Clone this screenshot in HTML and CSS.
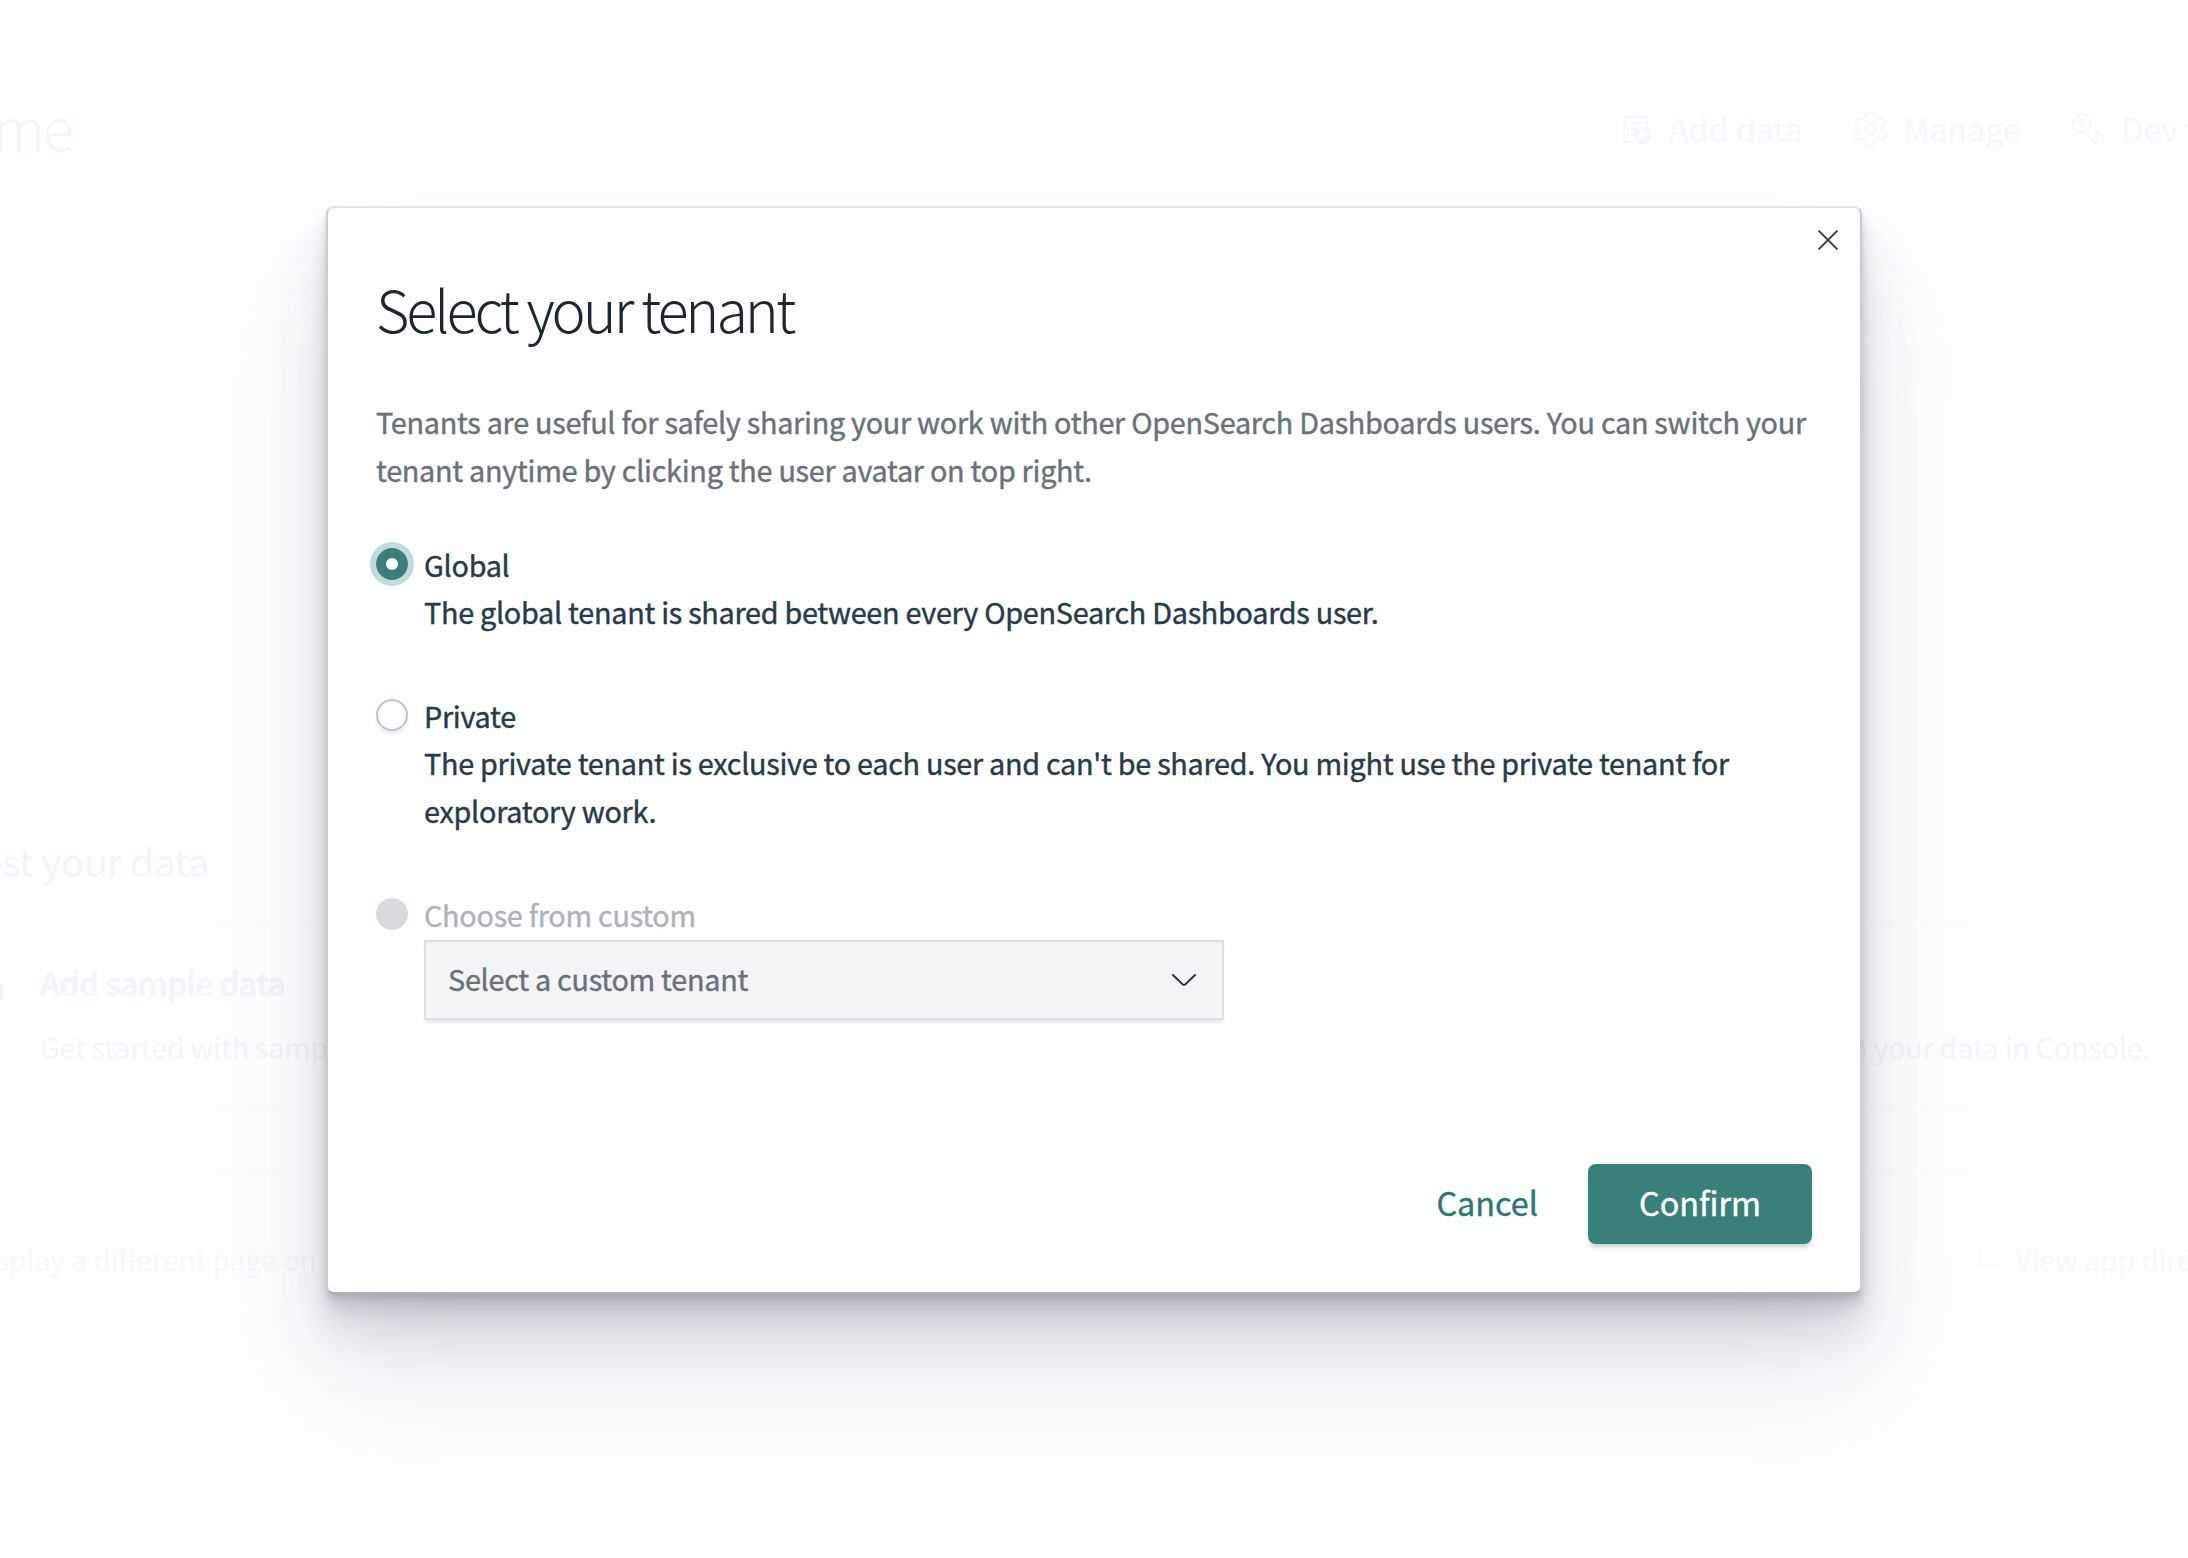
FILE: index.html
```html
<!DOCTYPE html>
<html lang="en">
<head>
<meta charset="utf-8">
<title>Select your tenant</title>
<link rel="stylesheet" href="styles.css">
</head>
<body>
<div class="home">
  <header class="home-header">
    <div class="home-title">Home</div>
    <nav class="home-links">
      <span class="link link-add"><svg width="30" height="32" viewBox="0 0 30 32" fill="none" stroke="currentColor" stroke-width="2"><path d="M13 29H2V4h23v12M5 10h2m2 0h12M5 16h2m2 0h6M5 22h2m2 0h3"/><circle cx="20.500" cy="22.500" r="9" fill="currentColor" stroke="none"/><path d="M20.500 17.500v10M15.500 22.500h10" stroke="#fdfeff"/></svg><b>Add data</b></span>
      <span class="link link-manage"><svg width="32" height="36" viewBox="0 0 32 36" fill="none" stroke="currentColor" stroke-width="2" stroke-linejoin="round"><path d="M13 1h6l2 5.500 3.500 2 5-1.200 2 4.500-3.500 4v4.400l3.500 4-2 4.500-5-1.200-3.500 2L19 35h-6l-2-5.500-3.500-2-5 1.200-2-4.500 3.500-4v-4.400l-3.500-4 2-4.500 5 1.200 3.500-2z"/><circle cx="16" cy="18" r="5.500"/></svg><b>Manage</b></span>
      <span class="link link-dev"><svg width="34" height="34" viewBox="0 0 34 34" fill="none" stroke="currentColor" stroke-width="2"><path d="M6 3l6 6c1.500 3-1 5-3 3L3 7c-3 5-1 12 5 13 2 .5 3.500 0 5-.5l11 11c4 4 10-1 7-6l-8-8M6 3c7-4 16 2 13 11-.5 1.500-1.500 3-3 4"/><circle cx="26" cy="26" r="1.500" fill="currentColor"/></svg><b>Dev tools</b></span>
    </nav>
  </header>
  <section class="ingest">
    <h2 class="ingest-title">Ingest your data</h2>
    <div class="cards">
      <div class="card"><i class="card-dot"></i><h3 class="card-title">Add sample data</h3><p class="card-text">Get started with sample data</p></div>
      <p class="card-text card-right">Search your data in Console.</p>
    </div>
  </section>
  <div class="rule"></div>
  <footer class="home-footer">
    <span class="foot-left">Display a different page on</span>
    <span class="foot-right"><svg width="20" height="20" viewBox="0 0 20 20" fill="currentColor"><path d="M1 1h3v3H1zM8.500 1h3v3h-3zM16 1h3v3h-3zM1 8.500h3v3H1zM8.500 8.500h3v3h-3zM16 8.500h3v3h-3zM1 16h3v3H1zM8.500 16h3v3h-3zM16 16h3v3h-3z"/></svg><b>View app directory</b></span>
  </footer>
</div>
<div class="overlay">
  <div class="modal" role="dialog">
    <button class="close" aria-label="Close"><svg width="20" height="20" viewBox="0 0 20 20" fill="none" stroke="currentColor" stroke-width="1.800"><path d="M.5.500l19 19M19.500.500l-19 19"/></svg></button>
    <h1 class="title">Select your tenant</h1>
    <p class="intro">Tenants are useful for safely sharing your work with other OpenSearch Dashboards users. You can switch your<br>tenant anytime by clicking the user avatar on top right.</p>
    <div class="options">
      <div class="option"><i class="radio checked"></i><div class="option-text">Global<br>The global tenant is shared between every OpenSearch Dashboards user.</div></div>
      <div class="option"><i class="radio"></i><div class="option-text">Private<br>The private tenant is exclusive to each user and can't be shared. You might use the private tenant for<br>exploratory work.</div></div>
      <div class="option disabled"><i class="radio off"></i><div class="option-text">Choose from custom
        <div class="select"><span>Select a custom tenant</span><svg width="24" height="13" viewBox="0 0 24 13" fill="none" stroke="currentColor" stroke-width="2" stroke-linecap="round" stroke-linejoin="round"><path d="M1 1l9.800 9.500q1.200 1 2.400 0L23 1"/></svg></div></div></div>
    </div>
    <div class="actions"><button class="cancel">Cancel</button><button class="confirm">Confirm</button></div>
  </div>
</div>
</body>
</html>
```
FILE: styles.css
```css
* { box-sizing: border-box; }
html, body { margin: 0; height: 1558px; overflow: hidden; background: #fdfeff; }
body { position: relative; font-family: "Noto Sans CJK SC", "Noto Sans", sans-serif; font-size: 28.8px; line-height: 47.6px; letter-spacing: -.28px; color: #2a3947; white-space: nowrap; }
h1, h2, h3, p { margin: 0; font-weight: 400; }
b { font-weight: 400; }
button { font: inherit; letter-spacing: 0; border: 0; padding: 0; background: none; }
svg { display: block; flex: none; }

.home { height: 1558px; overflow: hidden; display: flex; flex-direction: column; color: #f4f5f8; }
.home-header { height: 284px; padding-top: 86px; display: flex; justify-content: space-between; border-bottom: 2px solid #fcfdfe; }
.home-title { width: 72px; height: 80px; display: flex; justify-content: flex-end; font-size: 57.6px; line-height: 80px; font-weight: 300; letter-spacing: -2px; }
.home-links { display: flex; width: 566px; padding-top: 19px; color: #f5f8fa; font-size: 32.4px; line-height: 48px; letter-spacing: -.1px; }
.link { display: flex; flex: none; height: 48px; align-items: center; }
.link b { margin-top: -2px; }
.link-add { width: 232px; gap: 17px; }
.link-manage { width: 217px; gap: 17px; }
.link-dev { gap: 16px; }
.ingest { height: 823px; padding-top: 548px; border-bottom: 2px solid #fbfcfd; }
.ingest-title { width: 209px; height: 94px; display: flex; justify-content: flex-end; font-size: 39.6px; line-height: 56px; letter-spacing: -.8px; }
.cards { display: flex; justify-content: space-between; border-top: 2px solid #fbfcfd; padding-top: 30px; }
.card { position: relative; padding-left: 40px; }
.card-dot { position: absolute; left: -21px; top: 21px; width: 26px; height: 26px; border-radius: 50%; background: #f5f6f9; }
.card-title { font-size: 32.4px; line-height: 48px; font-weight: 500; letter-spacing: -.85px; -webkit-text-stroke: .6px currentColor; }
.card-text { padding-top: 16.500px; }
.card-right { padding-top: 64.500px; padding-right: 38px; }
.rule { height: 64px; border-bottom: 2px solid #fbfcfd; }
.home-footer { display: flex; justify-content: space-between; padding-top: 63.500px; color: #f6f9fa; }
.foot-left { width: 317px; display: flex; justify-content: flex-end; }
.foot-right { width: 211px; display: flex; align-items: center; gap: 18px; }

.overlay { position: absolute; inset: 0; padding: 206px 326px 264px; }
.modal { position: relative; width: 1536px; height: 1088px; padding: 60px 48px 48px; display: flex; flex-direction: column; background: #fdfeff; border: 2px solid #c6cdd3; border-top-color: #e2e5e8; border-bottom-color: #aab2ba; border-radius: 8px;
  box-shadow: 0 80px 128px rgba(65,78,101,.1), 0 48px 64px rgba(65,78,101,.1), 0 32px 32px rgba(65,78,101,.1), 0 16px 16px rgba(65,78,101,.1), 0 8px 8px rgba(65,78,101,.1), 0 4px 4px rgba(65,78,101,.1); }
.close { position: absolute; top: 22px; right: 22px; color: #2a3947; }
.title { font-size: 57.6px; line-height: 80px; font-weight: 300; letter-spacing: -3.05px; color: #1a2733; }
.intro { margin-top: 50px; color: #6a717b; }
.intro, .options { -webkit-text-stroke: .4px currentColor; }
.options { margin-top: 47.5px; display: flex; flex-direction: column; gap: 56px; }
.option { display: flex; gap: 16px; }
.radio { flex: none; width: 32px; height: 32px; margin-top: 7px; border: 2px solid #c0c3c8; border-radius: 50%; box-shadow: 0 4px 4px -2px rgba(60,70,90,.15); }
.radio.checked { border: 10px solid #3a807a; box-shadow: 0 0 0 6px #c2dad9; }
.radio.off { border: 0; background: #d7d9dd; box-shadow: none; }
.disabled { color: #adb3ba; }
.select { width: 800px; height: 80px; margin-top: 2px; padding: 0 26px 0 22px; display: flex; align-items: center; justify-content: space-between; background: #f3f4f6; border: 2px solid #dce1e6; box-shadow: 0 4px 4px -2px rgba(60,70,90,.15); color: #6a717b; }
.select span { margin-top: -2px; }
.select svg { color: #2a3947; }
.actions { margin-top: auto; display: flex; justify-content: flex-end; gap: 50px; font-size: 32.4px; line-height: 76px; -webkit-text-stroke: .4px currentColor; }
.cancel, .confirm { height: 80px; padding-bottom: 4px; }
.cancel { color: #2f7772; }
.confirm { width: 224px; border-radius: 8px; background: #3a807a; color: #fff; box-shadow: 0 4px 4px -1px rgba(58,100,100,.3); }
```
